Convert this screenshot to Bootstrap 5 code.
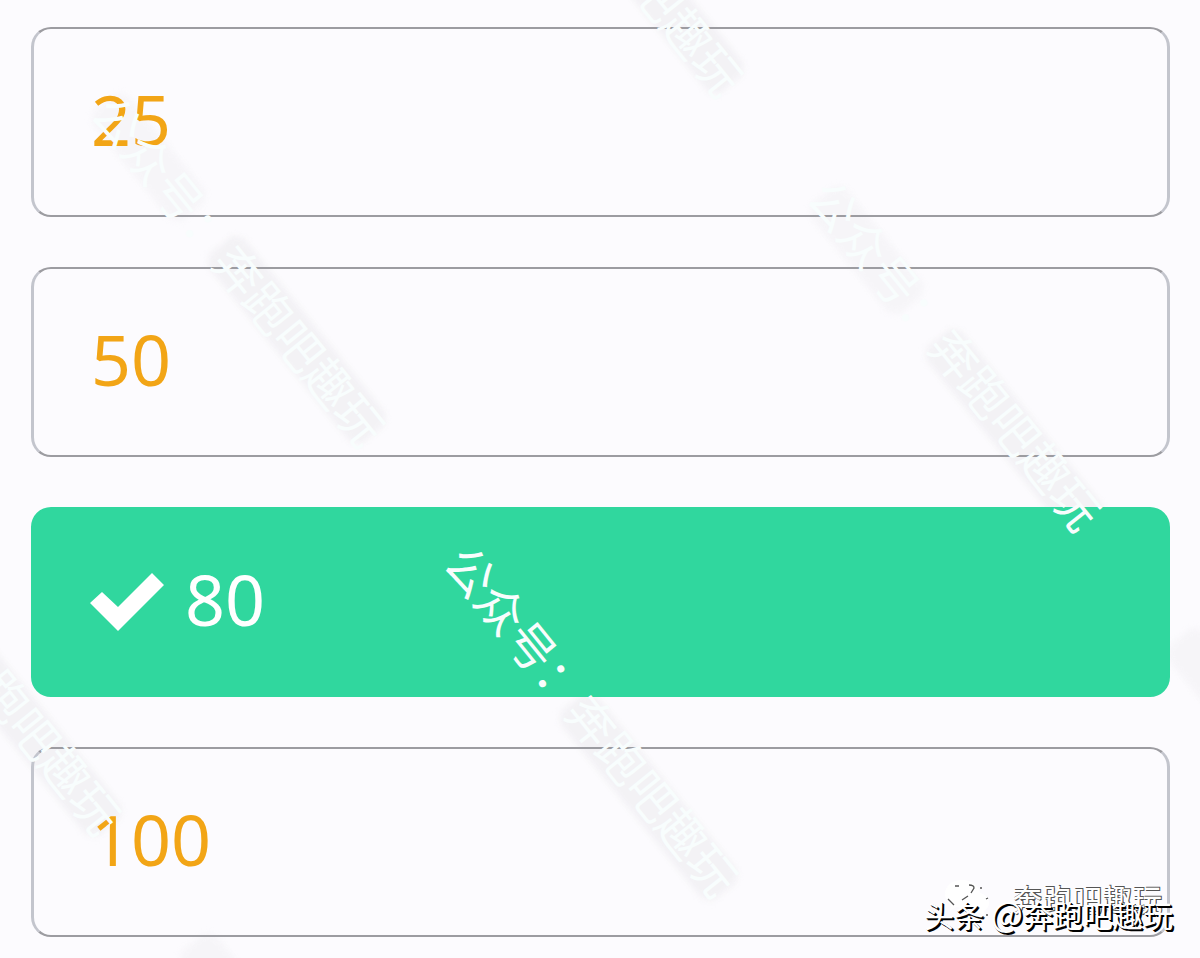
<!DOCTYPE html>
<html lang="zh-CN">
<head>
<meta charset="utf-8">
<meta name="viewport" content="width=device-width, initial-scale=1">
<title>选项</title>
<link rel="stylesheet" href="https://cdn.jsdelivr.net/npm/bootstrap@5.3.0/dist/css/bootstrap.min.css">
<style>
body { background: #fcfbfe; font-family: "Noto Sans", "Noto Sans CJK SC", sans-serif; }
.stage { min-height: 100vh; padding: 27px 30px 21px 31px; }
.options { gap: 50px; z-index: 1; }
.option {
  min-height: 190px; padding: 0 57px 6px; gap: 20px;
  font-size: 70px; font-weight: 400; line-height: 80px; color: #f2a516;
  background: transparent; border-style: solid; border-width: 2px 3px;
  border-color: #9c9ca1 #c3c5cd; border-radius: 20px;
}
.option.chosen { color: #fff; background: #30d79e; border-color: #30d79e; }
.tick { width: 76px; height: 60px; margin: 6px 0 0 -2px; }
.veil { inset: 0; pointer-events: none; }
.veil-top { z-index: 2; }
/* diagonal watermark, repeated over the page */
.stamp { width: 436px; height: 48px; transform-origin: 24px 24px; transform: rotate(51deg); }
.stamp-text { font-family: "Noto Sans CJK SC", sans-serif; font-weight: 400; font-size: 48px; line-height: 48px; color: #f8fdfd; }
.haze::before, .haze::after {
  content: ""; position: absolute; top: 2px; height: 46px; border-radius: 14px; filter: blur(3px);
  background: repeating-linear-gradient(78deg, #f1f0f3 0 5px, #f6f5f8 5px 9px);
}
.haze::before { left: 0; width: 142px; opacity: .6; }
.haze::after { left: 184px; width: 244px; }
.credit { font-family: "Noto Sans CJK SC", sans-serif; font-size: 30px; line-height: 36px; color: #fff; right: 27px; bottom: 26px; font-weight: 400; text-shadow: 2px 2px 0 #000, 1px 1px 0 #000; }
.credit-at { font-size: 34px; line-height: 36px; }
.credit-back { right: 38px; bottom: 41px; gap: 22px; text-shadow: 1px -1px 0 #555, 1px 1px 0 #555; }
.chat-mark { width: 46px; height: 38px; }
</style>
<script src="https://cdn.jsdelivr.net/npm/bootstrap@5.3.0/dist/js/bootstrap.bundle.min.js"></script>
</head>
<body>
<div class="stage position-relative overflow-hidden">
  <div class="veil position-absolute" aria-hidden="true">
    <div class="stamp haze position-absolute" style="left:96px;top:96px"></div>
    <div class="stamp haze position-absolute" style="left:454px;top:-254px"></div>
    <div class="stamp haze position-absolute" style="left:448px;top:553px"></div>
    <div class="stamp haze position-absolute" style="left:814px;top:189px"></div>
    <div class="stamp haze position-absolute" style="left:-168px;top:489px"></div>
    <div class="stamp haze position-absolute" style="left:1171px;top:631px"></div>
    <div class="stamp haze position-absolute" style="left:184px;top:936px"></div>
  </div>

  <main class="options position-relative d-grid">
    <button type="button" class="option d-flex align-items-center w-100">25</button>
    <button type="button" class="option d-flex align-items-center w-100">50</button>
    <button type="button" class="option chosen d-flex align-items-center w-100" aria-pressed="true">
      <svg class="tick" viewBox="0 0 76 60" aria-hidden="true"><path fill="#fff" d="M1 31 13 20 29 35 63 1 75 13 29 59Z"/></svg>
      <span>80</span>
    </button>
    <button type="button" class="option d-flex align-items-center w-100">100</button>
  </main>

  <div class="veil veil-top position-absolute">
    <div class="stamp stamp-text position-absolute text-nowrap" style="left:96px;top:96px">公众号：奔跑吧趣玩</div>
    <div class="stamp stamp-text position-absolute text-nowrap" style="left:454px;top:-254px">公众号：奔跑吧趣玩</div>
    <div class="stamp stamp-text position-absolute text-nowrap" style="left:449px;top:546px">公众号：奔跑吧趣玩</div>
    <div class="stamp stamp-text position-absolute text-nowrap" style="left:812px;top:180px">公众号：奔跑吧趣玩</div>
    <div class="stamp stamp-text position-absolute text-nowrap" style="left:-168px;top:484px">公众号：奔跑吧趣玩</div>
    <div class="credit credit-back position-absolute d-flex align-items-center text-nowrap">
      <svg class="chat-mark" viewBox="0 0 46 38" aria-hidden="true">
        <path fill="#fff" d="M18 1C8 1 1 7 1 15c0 5 3 8 6 11l-1 6 6-4 7 1c10 0 17-6 17-14S28 1 18 1Z"/>
        <path fill="#fff" d="M31 13c-8 0-14 5-14 11s6 11 14 11l5-1 5 3-1-5c3-2 5-5 5-8 0-6-6-11-14-11Z"/>
        <path fill="none" stroke="#555" stroke-width="1.3" d="M11 7h4M25 6q5 0 5 3l-3 5M36 9h2M4 20l6 6M24 17l-6 4M42 20l2-1M42 36h2"/>
      </svg>
      <span>奔跑吧趣玩</span>
    </div>
    <div class="credit position-absolute text-nowrap">头条 <span class="credit-at">@</span>奔跑吧趣玩</div>
  </div>
</div>
</body>
</html>
